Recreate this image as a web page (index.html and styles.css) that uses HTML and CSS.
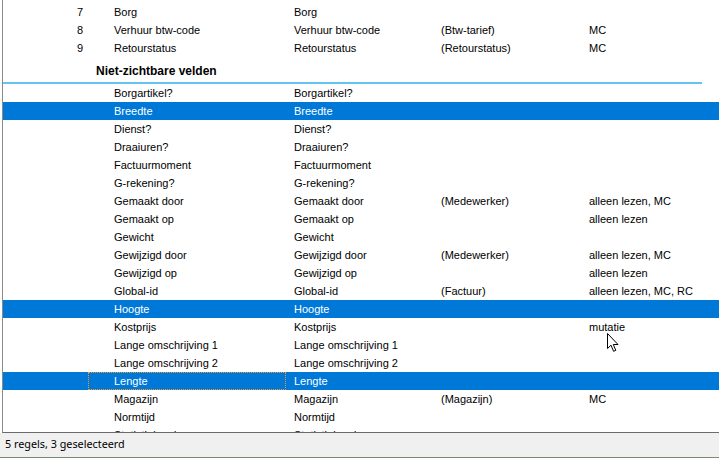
FILE: index.html
```html
<!DOCTYPE html>
<html>
<head>
  <meta charset="UTF-8">
  <title>Velden</title>
  <link rel="stylesheet" href="styles.css">
</head>
<body>
  <div class="field-list">
    <div class="row"><span class="num">7</span><span>Borg</span><span>Borg</span><span></span><span></span></div>
    <div class="row"><span class="num">8</span><span>Verhuur btw-code</span><span>Verhuur btw-code</span><span>(Btw-tarief)</span><span>MC</span></div>
    <div class="row"><span class="num">9</span><span>Retourstatus</span><span>Retourstatus</span><span>(Retourstatus)</span><span>MC</span></div>

    <div class="group-header">Niet-zichtbare velden</div>

    <div class="row"><span class="num"></span><span>Borgartikel?</span><span>Borgartikel?</span><span></span><span></span></div>
    <div class="row selected"><span class="num"></span><span>Breedte</span><span>Breedte</span><span></span><span></span></div>
    <div class="row"><span class="num"></span><span>Dienst?</span><span>Dienst?</span><span></span><span></span></div>
    <div class="row"><span class="num"></span><span>Draaiuren?</span><span>Draaiuren?</span><span></span><span></span></div>
    <div class="row"><span class="num"></span><span>Factuurmoment</span><span>Factuurmoment</span><span></span><span></span></div>
    <div class="row"><span class="num"></span><span>G-rekening?</span><span>G-rekening?</span><span></span><span></span></div>
    <div class="row"><span class="num"></span><span>Gemaakt door</span><span>Gemaakt door</span><span>(Medewerker)</span><span>alleen lezen, MC</span></div>
    <div class="row"><span class="num"></span><span>Gemaakt op</span><span>Gemaakt op</span><span></span><span>alleen lezen</span></div>
    <div class="row"><span class="num"></span><span>Gewicht</span><span>Gewicht</span><span></span><span></span></div>
    <div class="row"><span class="num"></span><span>Gewijzigd door</span><span>Gewijzigd door</span><span>(Medewerker)</span><span>alleen lezen, MC</span></div>
    <div class="row"><span class="num"></span><span>Gewijzigd op</span><span>Gewijzigd op</span><span></span><span>alleen lezen</span></div>
    <div class="row"><span class="num"></span><span>Global-id</span><span>Global-id</span><span>(Factuur)</span><span>alleen lezen, MC, RC</span></div>
    <div class="row selected"><span class="num"></span><span>Hoogte</span><span>Hoogte</span><span></span><span></span></div>
    <div class="row"><span class="num"></span><span>Kostprijs</span><span>Kostprijs</span><span></span><span>mutatie</span></div>
    <div class="row"><span class="num"></span><span>Lange omschrijving 1</span><span>Lange omschrijving 1</span><span></span><span></span></div>
    <div class="row"><span class="num"></span><span>Lange omschrijving 2</span><span>Lange omschrijving 2</span><span></span><span></span></div>
    <div class="row selected"><span class="num"></span><span class="focused">Lengte</span><span>Lengte</span><span></span><span></span></div>
    <div class="row"><span class="num"></span><span>Magazijn</span><span>Magazijn</span><span>(Magazijn)</span><span>MC</span></div>
    <div class="row"><span class="num"></span><span>Normtijd</span><span>Normtijd</span><span></span><span></span></div>
    <div class="row"><span class="num"></span><span>Statistiekcode</span><span>Statistiekcode</span><span></span><span></span></div>

    <!-- mouse pointer -->
    <svg class="pointer" width="13" height="20" viewBox="0 0 13 20">
      <path d="M0.5 0.5 L0.5 15.5 L4 12.2 L6.6 18.3 L8.8 17.4 L6.3 11.5 L11 11.5 Z" fill="#fff" stroke="#000" stroke-width="1" stroke-linejoin="miter"/>
    </svg>
  </div>

  <div class="status-bar">5 regels, 3 geselecteerd</div>
</body>
</html>
```

FILE: styles.css
```css
body {
  margin: 0;
  width: 719px;
  height: 458px;
  overflow: hidden;
  background-color: #fff;
  font-family: "Liberation Sans", Arial, sans-serif;
  font-size: 11px;
  color: #000;
}

.field-list {
  position: relative;
  height: 429px;
  margin-left: 2px;
  padding-top: 3px;
  border-left: 1px solid #8a8a8a;
  border-bottom: 1px solid #6b6b6b;
  overflow: hidden;
}

.row {
  display: grid;
  grid-template-columns: 85px 198px 147px 148px 1fr;
  height: 18px;
  line-height: 18px;
  white-space: nowrap;
}

.row span {
  overflow: hidden;
  padding-left: 8px;
}

.row .num {
  text-align: right;
  padding-left: 0;
  padding-right: 5px;
}

.row span:nth-child(2) {
  padding-left: 26px;
}

.row.selected {
  background-color: #0078d7;
  color: #fff;
}

.row .focused {
  outline: 1px dotted #f39b2a;
  outline-offset: -1px;
}

.group-header {
  height: 25px;
  line-height: 28px;
  padding-left: 93px;
  font-size: 12px;
  font-weight: bold;
  border-bottom: 2px solid #63c4f4;
  margin-right: 17px;
}

.pointer {
  position: absolute;
  left: 604px;
  top: 333px;
}

.status-bar {
  height: 24px;
  line-height: 22px;
  padding-left: 5px;
  background-color: #f0f0f0;
  border-bottom: 1px solid #7b8a72;
  font-family: "Noto Sans", sans-serif;
  font-size: 10.8px;
}
```
